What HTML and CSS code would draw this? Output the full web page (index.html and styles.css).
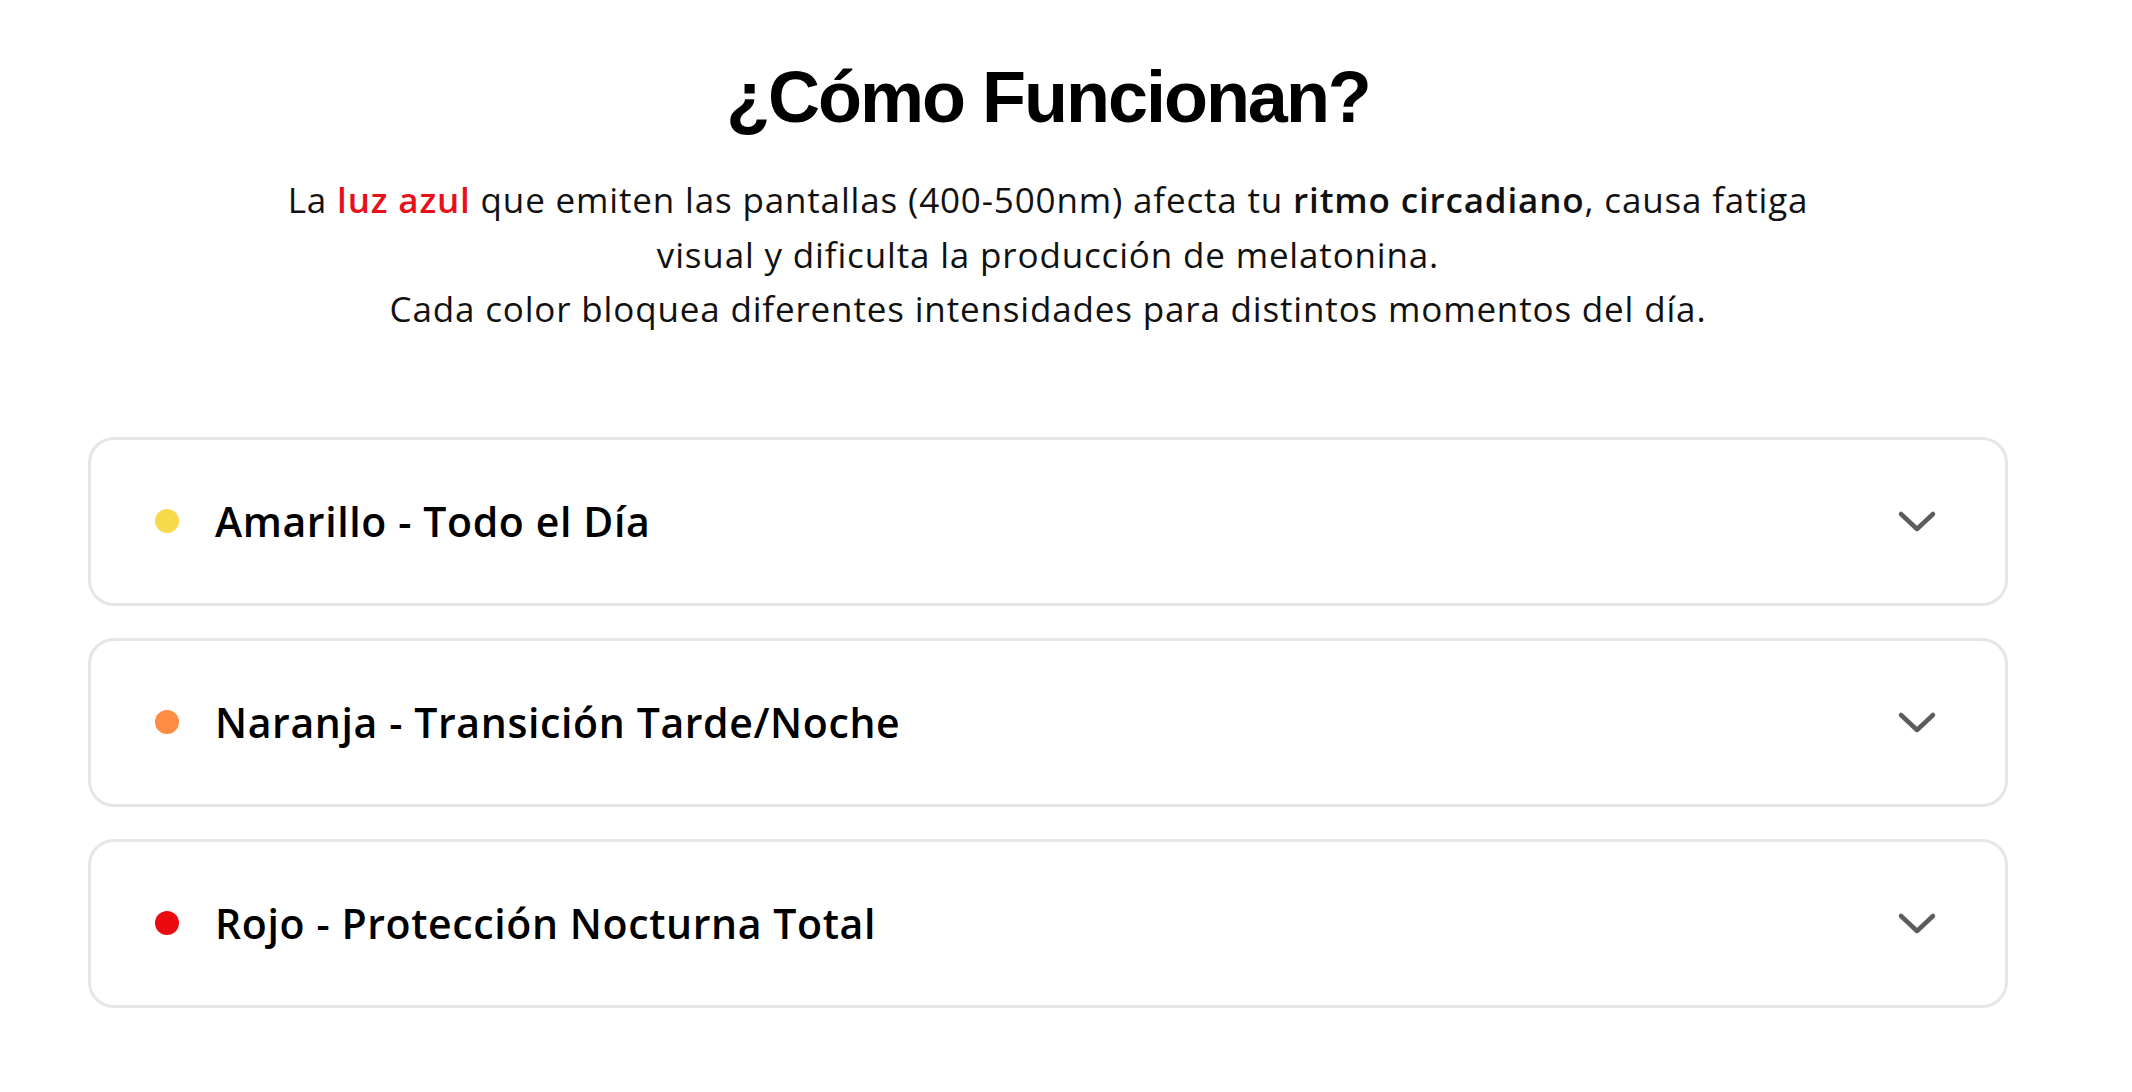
FILE: index.html
```html
<!DOCTYPE html>
<html lang="es">
<head>
<meta charset="utf-8">
<title>¿Cómo Funcionan?</title>
<link rel="stylesheet" href="styles.css">
</head>
<body>
<section class="how">
  <h2 class="how-title">¿Cómo Funcionan?</h2>
  <p class="how-intro">La <strong class="red">luz azul</strong> que emiten las pantallas (400-500nm) afecta tu <strong>ritmo circadiano</strong>, causa fatiga<br>visual y dificulta la producción de melatonina.<br>Cada color bloquea diferentes intensidades para distintos momentos del día.</p>
  <div class="faq">
    <div class="faq-item">
      <div class="faq-head">
        <span class="dot dot-yellow"></span>
        <span class="faq-label">Amarillo - Todo el Día</span>
        <svg class="chev" width="48" height="48" viewBox="0 0 48 48"><polyline points="8,17 24,32 40,17" fill="none" stroke="#5c5c5c" stroke-width="4.5" stroke-linecap="round" stroke-linejoin="round"/></svg>
      </div>
    </div>
    <div class="faq-item">
      <div class="faq-head">
        <span class="dot dot-orange"></span>
        <span class="faq-label">Naranja - Transición Tarde/Noche</span>
        <svg class="chev" width="48" height="48" viewBox="0 0 48 48"><polyline points="8,17 24,32 40,17" fill="none" stroke="#5c5c5c" stroke-width="4.5" stroke-linecap="round" stroke-linejoin="round"/></svg>
      </div>
    </div>
    <div class="faq-item">
      <div class="faq-head">
        <span class="dot dot-red"></span>
        <span class="faq-label">Rojo - Protección Nocturna Total</span>
        <svg class="chev" width="48" height="48" viewBox="0 0 48 48"><polyline points="8,17 24,32 40,17" fill="none" stroke="#5c5c5c" stroke-width="4.5" stroke-linecap="round" stroke-linejoin="round"/></svg>
      </div>
    </div>
  </div>
</section>
</body>
</html>
```

FILE: styles.css
```css
* { box-sizing: border-box; }
html, body { margin: 0; padding: 0; background: #fff; }
body { font-family: "Open Sans", "Liberation Sans", sans-serif; color: #000; }

.how {
  width: 1920px;
  margin-left: 88px;
  padding-top: 54px;
}

.how-title {
  margin: 0;
  text-align: center;
  font-family: "Liberation Sans", Arial, sans-serif;
  font-weight: 700;
  font-size: 72px;
  line-height: 1.2;
  letter-spacing: -0.028em;
  color: #000;
}

.how-intro {
  margin: 33px 0 0;
  text-align: center;
  font-size: 35px;
  line-height: 54.5px;
  letter-spacing: 0.024em;
  color: #111;
}
.how-intro strong { font-weight: 600; }
.how-intro .red { color: #e8101a; }

.faq {
  margin-top: 100px;
  display: flex;
  flex-direction: column;
  gap: 32px;
}

.faq-item {
  border: 3px solid #e6e6e6;
  border-radius: 26px;
  background: #fff;
}

.faq-head {
  height: 163px;
  display: flex;
  align-items: center;
  padding: 0 64px;
}

.dot {
  width: 24px;
  height: 24px;
  border-radius: 50%;
  flex: none;
  margin-right: 36px;
}
.dot-yellow { background: #f8d94c; }
.dot-orange { background: #ff8c42; }
.dot-red { background: #ea0a10; }

.faq-label {
  flex: 1;
  font-size: 41px;
  font-weight: 600;
  letter-spacing: 0.015em;
  color: #000;
}

.chev { flex: none; display: block; }
```
